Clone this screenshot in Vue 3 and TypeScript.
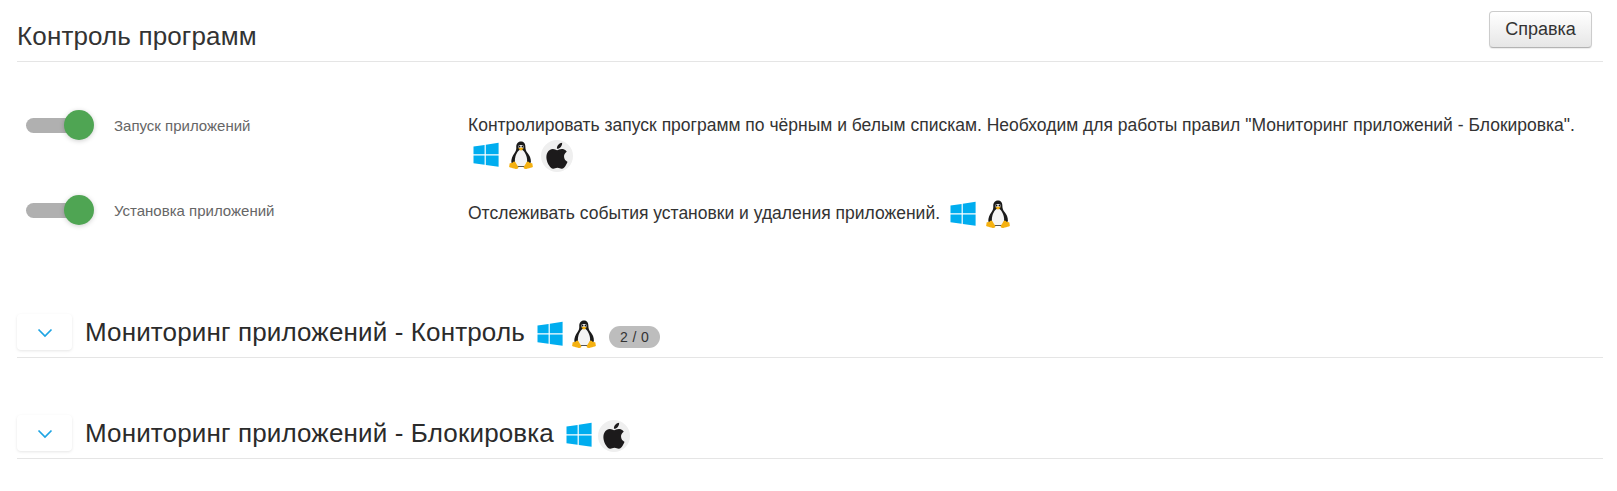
<template>
  <div class="page">
    <svg class="defs" aria-hidden="true">
      <symbol id="ico-win" viewBox="0 0 32 32">
        <path fill="#00adef" d="M4.500 6.400 15.600 5V14.200H4.500ZM16.800 4.800 29.600 2.800V14.200H16.800ZM4.500 15.400H15.600V24.700L4.500 23.200ZM16.800 15.400H29.600V26.800L16.800 24.900Z" />
      </symbol>
      <symbol id="ico-tux" viewBox="0 0 32 32">
        <g transform="translate(-1.600 -1.200) scale(1.100)">
          <path fill="#1b1b1b" d="M16 2.500c-3 0-4.400 2.300-4.300 5.200.1 2.300-.4 3.600-1.700 5.400-1.700 2.400-3 5.200-2.800 8.300L10 25.500h12.500l2.500-4.500c.2-3-1.200-5.700-3-8-1.400-1.800-2-3.200-2-5.300C20 4.800 19 2.500 16 2.500Z" />
          <path fill="#f4f4f4" d="M16 9.800c-2.300 0-4.400 3.900-5.200 6.900-.7 2.700-.4 6 .6 8h9.200c1-2 1.300-5.300.6-8-.8-3-2.900-6.900-5.200-6.900Z" />
          <path fill="#f4f4f4" d="M14.800 5.600c-.8 0-1.200.8-1.200 1.700 0 .9.500 1.300 1.200 1.300h2.400c.7 0 1.200-.4 1.200-1.300s-.4-1.700-1.200-1.700Z" />
          <circle cx="14.700" cy="7" r=".8" fill="#111" />
          <circle cx="17.300" cy="7" r=".8" fill="#111" />
          <path fill="#f5b111" d="M13.500 8.800 16 7.900l2.500.9L16 10.800Z" />
          <path fill="#f5b111" d="M9.300 20.800c1-.5 1.800.5 2.300 1.600.6 1.200 1.800 2.500 2 3.500.2 1.300-1.200 1.700-2.400 1.500-1.800-.3-3.600-1-5-1.300-.8-.2-1.200-.7-.9-1.300.3-.8.2-1.600.3-2.200.2-.8 1.100-.5 1.900-.7.8-.2 1-.8 1.800-1.100ZM22.700 20.800c-1-.5-1.800.5-2.300 1.600-.6 1.200-1.800 2.500-2 3.500-.2 1.300 1.200 1.700 2.400 1.500 1.800-.3 3.600-1 5-1.300.8-.2 1.200-.7.9-1.300-.3-.8-.2-1.600-.3-2.200-.2-.8-1.100-.5-1.900-.7-.8-.2-1-.8-1.800-1.100Z" />
        </g>
      </symbol>
      <symbol id="ico-mac" viewBox="0 0 32 32">
        <circle cx="16" cy="16" r="16" fill="#efefef" />
        <g transform="translate(3 2.800) scale(1.080)">
          <path fill="#1c1a1b" d="M12.152 6.896c-.948 0-2.415-1.078-3.96-1.04-2.04.027-3.91 1.183-4.961 3.014-2.117 3.675-.546 9.103 1.519 12.09 1.013 1.454 2.208 3.09 3.792 3.039 1.52-.065 2.09-.987 3.935-.987 1.831 0 2.35.987 3.96.948 1.637-.026 2.676-1.48 3.676-2.948 1.156-1.688 1.636-3.325 1.662-3.415-.039-.013-3.182-1.221-3.22-4.857-.026-3.04 2.48-4.494 2.597-4.559-1.429-2.09-3.623-2.324-4.39-2.376-2-.156-3.675 1.09-4.61 1.09zM15.530 3.830c.843-1.012 1.400-2.427 1.245-3.830-1.207.052-2.662.805-3.532 1.818-.78.896-1.454 2.338-1.273 3.714 1.338.104 2.715-.688 3.559-1.701" />
        </g>
      </symbol>
    </svg>

    <header class="head">
      <h1>Контроль программ</h1>
      <button class="btn-help" type="button">Справка</button>
    </header>

    <div class="settings">
      <div v-for="row in rows" :key="row.label" class="row">
        <div class="row-left">
          <span class="switch"><span class="knob"></span></span>
          <span class="label">{{ row.label }}</span>
        </div>
        <div class="desc" :class="{ wrap: row.wrap }">
          <span class="desc-text">{{ row.text }}</span>
          <span class="icons">
            <svg v-for="ic in row.icons" :key="ic" class="ico"><use :href="'#ico-' + ic" /></svg>
          </span>
        </div>
      </div>
    </div>

    <section v-for="s in sections" :key="s.title" class="section">
      <button class="toggle" type="button" aria-label="Развернуть">
        <svg class="chevron" width="16" height="10" viewBox="0 0 16 10"><path d="M1.500 1.500 8 8l6.500-6.500" fill="none" stroke="#1ea4e3" stroke-width="1.700" /></svg>
      </button>
      <h2>{{ s.title }}</h2>
      <span class="icons">
        <svg v-for="ic in s.icons" :key="ic" class="ico" :class="ic"><use :href="'#ico-' + ic" /></svg>
      </span>
      <span v-if="s.badge" class="badge">{{ s.badge }}</span>
    </section>
  </div>
</template>

<script setup lang="ts">
interface Row {
  label: string
  text: string
  icons: string[]
  wrap?: boolean
}

const rows: Row[] = [
  {
    label: 'Запуск приложений',
    text: 'Контролировать запуск программ по чёрным и белым спискам. Необходим для работы правил "Мониторинг приложений - Блокировка".',
    icons: ['win', 'tux', 'mac'],
    wrap: true
  },
  {
    label: 'Установка приложений',
    text: 'Отслеживать события установки и удаления приложений.',
    icons: ['win', 'tux']
  }
]

const sections = [
  { title: 'Мониторинг приложений - Контроль', icons: ['win', 'tux'], badge: '2 / 0' },
  { title: 'Мониторинг приложений - Блокировка', icons: ['win', 'mac'], badge: '' }
]
</script>

<style>
html,
body {
  background: #fff;
}
</style>

<style scoped>
.page {
  width: 1617px;
  height: 491px;
  box-sizing: border-box;
  padding: 0 14px 0 17px;
  overflow: hidden;
  font-family: "Liberation Sans", Arial, sans-serif;
  color: #333;
}

.defs {
  position: absolute;
  width: 0;
  height: 0;
}

.head {
  display: flex;
  align-items: flex-start;
  justify-content: space-between;
  height: 61px;
  border-bottom: 1px solid #e5e5e5;
}

.head h1 {
  margin: 22px 0 0;
  font-size: 26px;
  font-weight: 400;
  letter-spacing: 0.14px;
  line-height: 28px;
  color: #333;
}

.btn-help {
  width: 103px;
  height: 37px;
  margin: 11px 11px 0 0;
  padding: 0;
  border: 1px solid #ccc;
  border-bottom-color: #b3b3b3;
  border-radius: 4px;
  background: linear-gradient(#fff, #e6e6e6);
  box-shadow: 0 1px 1px rgba(0, 0, 0, 0.08);
  font: 18px "Liberation Sans", Arial, sans-serif;
  color: #333;
}

.settings {
  margin-top: 46px;
}

.row {
  display: flex;
  min-height: 85px;
}

.row-left {
  display: flex;
  align-items: center;
  width: 451px;
  height: 34px;
  padding-left: 9px;
  box-sizing: border-box;
}

.switch {
  position: relative;
  width: 49px;
  height: 15px;
  border-radius: 8px;
  background: #b0b0b0;
}

.knob {
  position: absolute;
  top: -8px;
  right: -19px;
  width: 30px;
  height: 30px;
  border-radius: 50%;
  background: #4fa553;
  box-shadow: 0 1px 5px rgba(0, 0, 0, 0.2);
}

.label {
  margin-left: 39px;
  font-size: 15px;
  color: #666;
}

.desc {
  display: flex;
  align-items: center;
  box-sizing: border-box;
  height: 34px;
  padding-top: 6px;
  font-size: 17.5px;
  line-height: 24px;
  color: #333;
}

.desc .icons {
  gap: 4px;
}

.desc.wrap {
  display: block;
  height: auto;
  padding-top: 5px;
  margin-bottom: -20px;
}

.desc.wrap .desc-text {
  display: block;
}

.desc.wrap .icons {
  margin-top: 3px;
  margin-left: 1px;
}

.desc:not(.wrap) .icons {
  margin-left: 6px;
  margin-top: 4px;
}

.icons {
  display: inline-flex;
  align-items: center;
  gap: 3px;
}

.ico {
  display: block;
  width: 32px;
  height: 32px;
}

.ico.mac {
  margin-left: 1px;
}

.section {
  display: flex;
  align-items: center;
  height: 50px;
  padding-top: 8px;
  border-bottom: 1px solid #e5e5e5;
  margin-bottom: 42px;
}

.settings + .section {
  margin-top: 21px;
}

.section .icons {
  margin-top: 5px;
}

.toggle {
  display: flex;
  align-items: center;
  justify-content: center;
  width: 55px;
  height: 36px;
  padding: 0;
  border: 0;
  border-radius: 4px;
  background: #fff;
  box-shadow: 0 1px 3px rgba(0, 0, 0, 0.1);
}

.chevron {
  margin-top: 2px;
}

.section h2 {
  margin: 0 8px 0 13px;
  font-size: 26px;
  font-weight: 400;
  letter-spacing: 0.14px;
  color: #2b2b2b;
}

.badge {
  margin: 10px 0 0 9px;
  padding: 0 11px;
  height: 22px;
  line-height: 22px;
  border-radius: 11px;
  background: #bdbdbd;
  font-size: 14px;
  letter-spacing: 0.4px;
  color: #333;
}
</style>
